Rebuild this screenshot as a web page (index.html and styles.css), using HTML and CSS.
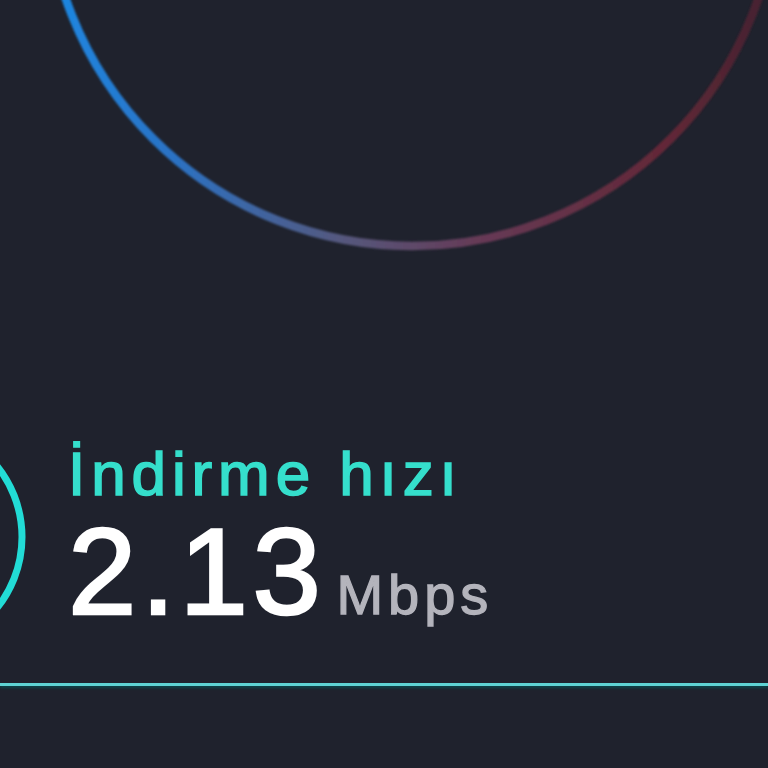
FILE: index.html
```html
<!DOCTYPE html>
<html lang="tr">
<head>
<meta charset="utf-8">
<link rel="stylesheet" href="styles.css">
</head>
<body>
<div class="page">
  <svg class="gauge" width="768" height="300" viewBox="0 0 768 300">
    <defs>
      <linearGradient id="arcGrad" x1="40" y1="0" x2="770" y2="0" gradientUnits="userSpaceOnUse">
        <stop offset="0" stop-color="#1c8ae6"/>
        <stop offset="0.18" stop-color="#2a72c4"/>
        <stop offset="0.42" stop-color="#56577c"/>
        <stop offset="0.6" stop-color="#663a56"/>
        <stop offset="0.85" stop-color="#642838"/>
        <stop offset="1" stop-color="#44222f"/>
      </linearGradient>
      <filter id="soft" x="-10%" y="-10%" width="120%" height="120%">
        <feGaussianBlur stdDeviation="0.9"/>
      </filter>
    </defs>
    <circle cx="412" cy="-120" r="366" fill="none" stroke="url(#arcGrad)" stroke-width="8.5" filter="url(#soft)"/>
  </svg>

  <div class="stat">
    <svg class="ring" width="68" height="200" viewBox="0 0 68 200">
      <circle cx="-91" cy="97" r="113" fill="none" stroke="#22dcd6" stroke-width="7"/>
    </svg>
    <div class="stat-text">
      <div class="label">İndirme hızı</div>
      <div class="value"><span class="num">2.13</span><span class="unit">Mbps</span></div>
    </div>
  </div>

  <div class="rule"></div>
</div>
</body>
</html>
```
FILE: styles.css
```css
html, body {
  margin: 0;
  padding: 0;
  background: #1f222d;
}
.page {
  width: 768px;
  height: 768px;
  overflow: hidden;
  background: #1f222d;
  font-family: "Liberation Sans", Arial, sans-serif;
}
.gauge {
  display: block;
}
.stat {
  display: flex;
  align-items: flex-start;
  height: 200px;
  margin-top: 140px;
}
.ring {
  display: block;
  flex: none;
}
.stat-text {
  display: flex;
  flex-direction: column;
  padding-top: 3px;
}
.label {
  color: #35dfcc;
  font-size: 62px;
  line-height: 62px;
  letter-spacing: 5.9px;
  -webkit-text-stroke: 1.6px #35dfcc;
}
.value {
  margin-top: 5px;
  line-height: 123px;
  white-space: nowrap;
}
.num {
  color: #ffffff;
  font-size: 123px;
  letter-spacing: 4.5px;
  -webkit-text-stroke: 2.6px #ffffff;
}
.unit {
  color: #b4b4bc;
  font-size: 56px;
  letter-spacing: 5px;
  margin-left: 11px;
  -webkit-text-stroke: 1.3px #b4b4bc;
}
.rule {
  margin-top: 43px;
  height: 3px;
  background: #5ed3d3;
  box-shadow: 0 2px 3px rgba(0, 90, 90, 0.7);
}
```
